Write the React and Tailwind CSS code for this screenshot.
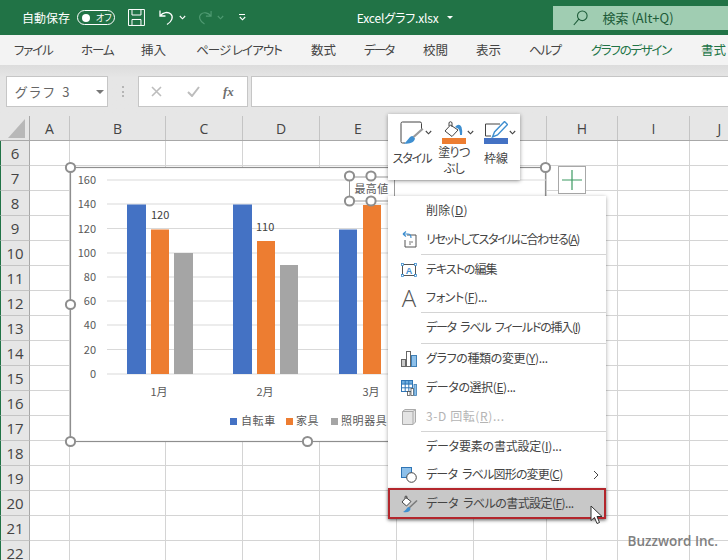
const cols = [
  { name: "A", w: "w-[40px]" },
  { name: "B", w: "w-[96px]" },
  { name: "C", w: "w-[77px]" },
  { name: "D", w: "w-[77px]" },
  { name: "E", w: "w-[77px]" },
  { name: "F", w: "w-[77px]" },
  { name: "G", w: "w-[73px]" },
  { name: "H", w: "w-[71px]" },
  { name: "I", w: "w-[72px]" },
  { name: "J", w: "w-[60px]" },
];
const rows = [6, 7, 8, 9, 10, 11, 12, 13, 14, 15, 16, 17, 18, 19, 20, 21, 22];
const tabs = [
  { label: "ファイル", w: "w-[39px]", t: "tracking-[-1.2px]" },
  { label: "ホーム", w: "w-[32px]", t: "tracking-[-1.1px]" },
  { label: "挿入", w: "w-[27px]", t: "" },
  { label: "ページ レイアウト", w: "w-[87px]", t: "tracking-[-0.95px]" },
  { label: "数式", w: "w-[25px]", t: "" },
  { label: "データ", w: "w-[31px]", t: "tracking-[-1.8px]" },
  { label: "校閲", w: "w-[25px]", t: "" },
  { label: "表示", w: "w-[25px]", t: "" },
  { label: "ヘルプ", w: "w-[34px]", t: "tracking-[-1.4px]" },
  { label: "グラフのデザイン", w: "w-[82px]", t: "tracking-[-1.3px]", green: true },
  { label: "書式", w: "w-[26px]", t: "", green: true },
];

const jp = "font-['Noto_Sans_CJK_JP','Noto_Sans',sans-serif] [font-feature-settings:'palt']";

function Caret({ className }) {
  return (
    <svg className={className} width="7" height="5" viewBox="0 0 7 5">
      <path d="M0.8 1 L3.5 3.8 L6.2 1" fill="none" stroke="currentColor" strokeWidth="1.1" />
    </svg>
  );
}

function TitleBar() {
  return (
    <div className="h-[35px] bg-[#217346] flex items-center text-white text-[12px] relative">
      <span className="ml-[22px] w-[48px] whitespace-nowrap">自動保存</span>
      <div className="ml-[7px] w-[38px] h-[15px] rounded-full border border-white flex items-center pl-[4px]">
        <span className="w-[8px] h-[8px] rounded-full bg-white"></span>
        <span className="ml-[6px] text-[9px] leading-none">オフ</span>
      </div>
      <svg className="ml-[13px]" width="17" height="17" viewBox="0 0 17 17" fill="none" stroke="#fff" strokeWidth="1">
        <path d="M0.5 0.5 H16.5 V16.5 H0.5 Z M4 0.5 V6 H13 V0.5 M4 16.5 V10.5 H13 V16.5" />
      </svg>
      <svg className="ml-[13px]" width="17" height="17" viewBox="0 0 17 17" fill="none" stroke="#fff" strokeWidth="1.3">
        <path d="M2 1.5 V7 H7.5 M2.3 6.7 C5 3.2 10 2.5 12.8 5 C15.6 7.6 14.2 12.5 9 15.5" />
      </svg>
      <Caret className="ml-[4px] text-white" />
      <svg className="ml-[11px]" width="16" height="17" viewBox="0 0 17 17" fill="none" stroke="#4f9a72" strokeWidth="1.2">
        <path d="M15 1.5 V7 H9.5 M14.7 6.7 C12 3.2 7 2.5 4.2 5 C1.4 7.6 2.8 12.5 8 15.5" />
      </svg>
      <Caret className="ml-[4px] text-[#4f9a72]" />
      <div className="ml-[15px] flex flex-col items-center gap-[1px]">
        <span className="w-[6px] h-[1px] bg-white"></span>
        <Caret className="text-white" />
      </div>
      <span className="ml-[111px] w-[84px] whitespace-nowrap tracking-[-0.15px]">Excelグラフ.xlsx</span>
      <span className="ml-[6px] w-0 h-0 border-x-[3px] border-x-transparent border-t-[3px] border-t-white"></span>
      <div className="ml-[100px] w-[176px] h-[24px] mt-[1px] bg-[#a0cdb2] flex items-center text-[#1d5c39]">
        <svg className="ml-[20px]" width="15" height="16" viewBox="0 0 15 16" fill="none" stroke="#1d5c39" strokeWidth="1.1">
          <circle cx="9.3" cy="5.8" r="4.8" />
          <path d="M5.8 9.2 L0.8 15" />
        </svg>
        <span className="ml-[15px] text-[13px] whitespace-nowrap">検索 (Alt+Q)</span>
      </div>
    </div>
  );
}

function Ribbon() {
  return (
    <div className="h-[30px] bg-[#f3f3f3] flex items-center pl-[14px] gap-[28px] text-[12.5px] text-[#444444] overflow-hidden">
      {tabs.map((t) => (
        <span key={t.label} className={`${t.w} ${t.t} shrink-0 whitespace-nowrap ${t.green ? "text-[#217346]" : ""}`}>
          {t.label}
        </span>
      ))}
    </div>
  );
}

function FormulaBar() {
  return (
    <div className="h-[51px] bg-gradient-to-b from-[#dcdcdc] to-[#e6e6e6] to-[25%] flex pt-[11px] pl-[6px]">
      <div className="w-[102px] h-[31px] bg-white border border-[#c6c6c6] flex items-center pl-[8px] text-[13px] text-[#666666] tracking-[2.6px]">
        グラフ 3
        <span className="ml-auto mr-[3px] w-0 h-0 border-x-[4px] border-x-transparent border-t-[4px] border-t-[#777777]"></span>
      </div>
      <div className="ml-[14px] w-[2px] h-[11px] mt-[10px] border-l-2 border-dotted border-[#b5b5b5]"></div>
      <div className="ml-[14px] w-[110px] h-[31px] bg-white border border-[#c6c6c6] flex items-center text-[#bdbdbd]">
        <svg className="ml-[12px]" width="11" height="11" viewBox="0 0 11 11" fill="none" stroke="#bdbdbd" strokeWidth="1.6">
          <path d="M1 1 L10 10 M10 1 L1 10" />
        </svg>
        <svg className="ml-[25px]" width="13" height="11" viewBox="0 0 13 11" fill="none" stroke="#bdbdbd" strokeWidth="2">
          <path d="M1 6 L5 10 L12 1" />
        </svg>
        <span className="ml-[23px] font-['Liberation_Serif',serif] italic font-bold text-[13px] text-[#6e6e6e]">fx</span>
      </div>
      <div className="ml-[3px] flex-1 h-[31px] bg-white border border-r-0 border-[#c6c6c6]"></div>
    </div>
  );
}

function Sheet() {
  return (
    <div className="font-['Open_Sans',sans-serif]">
      <div className="flex h-[25px] bg-[#e6e6e6] border-b border-[#a8a8a8]">
        <div className="w-[30px] shrink-0 border-r border-[#a8a8a8] flex items-end justify-end pr-[4px] pb-[2px]">
          <svg width="17" height="19" viewBox="0 0 17 19">
            <path d="M17 0 V19 H0 Z" fill="#b8b8b8" />
          </svg>
        </div>
        {cols.map((c) => (
          <div key={c.name} className={`${c.w} shrink-0 border-r border-[#c4c4c4] flex items-center justify-center text-[14px] text-[#444444]`}>
            {c.name}
          </div>
        ))}
      </div>
      {rows.map((r) => (
        <div key={r} className="flex h-[25px]">
          <div className="w-[30px] shrink-0 bg-[#e6e6e6] border-l border-l-[#217346] border-r border-r-[#a8a8a8] border-b border-b-[#c4c4c4] flex items-center justify-center text-[15px] text-[#444444]">
            {r}
          </div>
          {cols.map((c) => (
            <div key={c.name} className={`${c.w} shrink-0 bg-white border-r border-b border-[#d4d4d4]`}></div>
          ))}
        </div>
      ))}
    </div>
  );
}

function Handle({ x, y }) {
  return <circle cx={x} cy={y} r="4.6" fill="#fff" stroke="#8e8e8e" strokeWidth="2" />;
}

const gridY = [180, 204, 228.5, 253, 277, 301, 325, 349.5, 374];
const yLabels = [160, 140, 120, 100, 80, 60, 40, 20, 0];
const bars = [
  { x: 127, w: 19, top: 204.5, fill: "#4472c4" },
  { x: 151, w: 18, top: 229.5, fill: "#ed7d31" },
  { x: 174, w: 19, top: 253, fill: "#a5a5a5" },
  { x: 233, w: 19, top: 204.5, fill: "#4472c4" },
  { x: 257, w: 18, top: 241, fill: "#ed7d31" },
  { x: 280, w: 18, top: 265, fill: "#a5a5a5" },
  { x: 339, w: 18, top: 229.5, fill: "#4472c4" },
  { x: 363, w: 18, top: 205, fill: "#ed7d31" },
];

function Chart() {
  const font = "'Noto Sans CJK JP','Noto Sans',sans-serif";
  return (
    <svg className="absolute left-[60px] top-[157px]" width="500" height="295" viewBox="60 157 500 295" fontFamily={font}>
      <rect x="70.5" y="167.5" width="475" height="274" fill="#fff" stroke="#8e8e8e" strokeWidth="1.2" />
      {gridY.map((y) => (
        <line key={y} x1="107" x2="546" y1={y} y2={y} stroke="#d9d9d9" strokeWidth="1" />
      ))}
      {yLabels.map((v, i) => (
        <text key={v} x="96" y={gridY[i] + 4} textAnchor="end" fontSize="11" fill="#595959">{v}</text>
      ))}
      {bars.map((b) => (
        <rect key={b.x} x={b.x} y={b.top} width={b.w} height={374 - b.top} fill={b.fill} />
      ))}
      <text x="151" y="219" fontSize="11" fill="#404040">120</text>
      <text x="256" y="231" fontSize="11" fill="#404040">110</text>
      <text x="159" y="396" textAnchor="middle" fontSize="11" fill="#595959">1月</text>
      <text x="265" y="396" textAnchor="middle" fontSize="11" fill="#595959">2月</text>
      <text x="371" y="396" textAnchor="middle" fontSize="11" fill="#595959">3月</text>
      <rect x="230" y="418" width="7" height="7" fill="#4472c4" />
      <text x="241" y="425" fontSize="11" letterSpacing="0.6" fill="#595959">自転車</text>
      <rect x="286" y="418" width="7" height="7" fill="#ed7d31" />
      <text x="296" y="425" fontSize="11" letterSpacing="0.6" fill="#595959">家具</text>
      <rect x="331" y="418" width="7" height="7" fill="#a5a5a5" />
      <text x="341" y="425" fontSize="11" letterSpacing="0.6" fill="#595959">照明器具</text>
      <rect x="349.5" y="177" width="45" height="24" fill="#fff" stroke="#9a9a9a" strokeWidth="1" />
      <text x="371.5" y="193" textAnchor="middle" fontSize="11" letterSpacing="0.4" fill="#595959">最高値</text>
      <Handle x={70.5} y={167.5} />
      <Handle x={70.5} y={304.5} />
      <Handle x={70.5} y={441.5} />
      <Handle x={307.5} y={441.5} />
      <Handle x={545.5} y={167.5} />
      <Handle x={349.5} y={176} />
      <Handle x={371} y={176} />
      <Handle x={349.5} y={201} />
      <Handle x={371} y={201} />
    </svg>
  );
}

function PlusButton() {
  return (
    <div className="absolute left-[558px] top-[166px] w-[28px] h-[28px] bg-white border border-[#a8a8a8] flex items-center justify-center">
      <svg width="20" height="20" viewBox="0 0 20 20" stroke="#3c9a63" strokeWidth="1.2">
        <path d="M10 0 V20 M0 10 H20" />
      </svg>
    </div>
  );
}

function MiniToolbar() {
  return (
    <div className="absolute left-[388px] top-[114px] w-[132px] h-[66px] bg-white shadow-[0_1px_4px_rgba(0,0,0,0.4)] flex text-[12px] text-[#444444] pt-[7px] pl-[5px] leading-[16px]">
      <div className="w-[38px] flex flex-col items-center shrink-0">
        <div className="relative h-[23px] w-[38px] flex justify-center">
          <svg width="24" height="23" viewBox="0 0 24 23" fill="none">
            <path d="M5 22 H2.5 Q1 22 1 20.5 V2.5 Q1 1 2.5 1 H20 Q21.5 1 21.5 2.5 V9" stroke="#444" strokeWidth="1" />
            <path d="M23.5 8.5 L14 17 L12.5 15.5 L22 7 Z" fill="#9a9a9a" />
            <path d="M12.5 15 C9 15 9 19 4 22.5 C10 23.5 14.5 21 15 17.5 Z" fill="#3f8fd0" />
          </svg>
          <Caret className="absolute left-[32px] top-[9px] text-[#444444]" />
        </div>
        <span className="mt-[6px] whitespace-nowrap tracking-[-1.1px]">スタイル</span>
      </div>
      <div className="ml-[6px] w-[34px] flex flex-col items-center shrink-0">
        <div className="relative h-[23px] w-[34px] flex justify-center">
          <svg width="24" height="23" viewBox="0 0 24 23" fill="none">
            <path d="M8.5 4 L3 10 L10 15.5 L16 9 Z" fill="#fff" stroke="#444" strokeWidth="1" />
            <path d="M7 5 V1.5 Q8.5 0 10 1.5 V6" stroke="#444" strokeWidth="1" />
            <path d="M13 6 Q17 1.5 19.5 6 Q20.5 9 20 14 L18 14 Q18 9 16 7.5 Z" fill="#3f8fd0" />
            <rect x="0" y="17" width="24" height="6" fill="#ed7d31" />
          </svg>
          <Caret className="absolute left-[30px] top-[9px] text-[#444444]" />
        </div>
        <span className="mt-[0px] w-[34px] text-center tracking-[-0.6px]">塗りつぶし</span>
      </div>
      <div className="ml-[10px] w-[30px] flex flex-col items-center shrink-0">
        <div className="relative h-[23px] w-[30px] flex justify-center">
          <svg width="24" height="23" viewBox="0 0 24 23" fill="none">
            <path d="M1.5 15 V3 H16 M1.5 15 H7" stroke="#444" strokeWidth="1" />
            <path d="M20.5 0.5 L23.5 3.5 L13.5 14 L8.5 16 L10.5 11 Z" fill="#fff" stroke="#3f8fd0" strokeWidth="1.4" />
            <rect x="0" y="17" width="24" height="6" fill="#4472c4" />
          </svg>
          <Caret className="absolute left-[28px] top-[9px] text-[#444444]" />
        </div>
        <span className="mt-[6px] whitespace-nowrap">枠線</span>
      </div>
    </div>
  );
}

function ResetIcon() {
  return (
    <svg width="15" height="17" viewBox="0 0 15 17" fill="none">
      <path d="M5 4 H14 V16 H3 V9" stroke="#555" strokeWidth="1" />
      <path d="M1 3 L4 0.5 M1 3 L4 5.5 M1 3 H6 Q9 3 9 7" stroke="#3f8fd0" strokeWidth="1.2" />
      <path d="M7 11 H11 M7 13 H9" stroke="#777" strokeWidth="1" />
    </svg>
  );
}

function TextBoxIcon() {
  return (
    <svg width="16" height="14" viewBox="0 0 16 14" fill="none">
      <rect x="1.5" y="1.5" width="13" height="11" stroke="#555" strokeWidth="1" />
      <text x="8" y="10.5" textAnchor="middle" fontSize="9" fontWeight="700" fontFamily="'Liberation Sans'" fill="#3f8fd0">A</text>
      <g fill="#fff" stroke="#3f8fd0" strokeWidth="0.8">
        <rect x="0.5" y="0.5" width="2" height="2" />
        <rect x="13.5" y="0.5" width="2" height="2" />
        <rect x="0.5" y="11.5" width="2" height="2" />
        <rect x="13.5" y="11.5" width="2" height="2" />
      </g>
    </svg>
  );
}

function ChartTypeIcon() {
  return (
    <svg width="16" height="16" viewBox="0 0 16 16">
      <rect x="0.5" y="8.5" width="4" height="7" fill="#c8c8c8" stroke="#666" />
      <rect x="5.5" y="0.5" width="4" height="15" fill="#fff" stroke="#666" />
      <rect x="10.5" y="4.5" width="5" height="11" fill="#8dc0ea" stroke="#3f7fb5" />
    </svg>
  );
}

function DataIcon() {
  return (
    <svg width="16" height="16" viewBox="0 0 16 16">
      <rect x="0.5" y="0.5" width="11" height="11" fill="#fff" stroke="#2f75b5" />
      <rect x="0.5" y="0.5" width="11" height="3.6" fill="#6faee0" stroke="#2f75b5" />
      <path d="M4.2 0.5 V11.5 M7.8 0.5 V11.5 M0.5 7.8 H11.5" stroke="#2f75b5" strokeWidth="1" />
      <rect x="6.5" y="11.5" width="2.5" height="4" fill="#fff" stroke="#555" strokeWidth="0.8" />
      <rect x="10" y="8.5" width="2.5" height="7" fill="#fff" stroke="#555" strokeWidth="0.8" />
      <rect x="13" y="4.5" width="2.5" height="11" fill="#8dc0ea" stroke="#3f7fb5" strokeWidth="0.8" />
    </svg>
  );
}

function CubeIcon() {
  return (
    <svg width="14" height="16" viewBox="0 0 14 16">
      <path d="M0.5 2.5 L3 0.5 H13.5 V13 L11 15.5 H0.5 Z" fill="#e4e4e4" stroke="#aaa" />
      <path d="M0.5 2.5 H11 V15.5 M11 2.5 L13.5 0.5" fill="none" stroke="#aaa" />
    </svg>
  );
}

function ShapeIcon() {
  return (
    <svg width="16" height="16" viewBox="0 0 16 16">
      <rect x="0.5" y="0.5" width="10" height="10" fill="#8dc0ea" stroke="#2f75b5" />
      <circle cx="10.5" cy="10.5" r="4.8" fill="#fff" stroke="#444" strokeWidth="1" />
    </svg>
  );
}

function FormatIcon() {
  return (
    <svg width="18" height="18" viewBox="0 0 18 18" fill="none">
      <path d="M6 2.5 L2 7 L6.5 11 L11 6.5 Z" fill="#fff" stroke="#444" strokeWidth="1" />
      <path d="M5 3.5 V1.5 Q6 0.5 7 1.5 V4" stroke="#444" strokeWidth="0.9" />
      <path d="M17 5.5 L9 13" stroke="#7a7a7a" strokeWidth="1.6" />
      <path d="M9 12 C6.5 12 6.5 15.5 3 17 C7.5 18 10.5 16.5 10.5 13.5 Z" fill="#3f8fd0" />
    </svg>
  );
}

function Sep() {
  return <div className="h-[1px] ml-[33px] bg-[#d4d4d4]"></div>;
}

function Item({ icon, h, t = "", disabled, arrow, children }) {
  return (
    <div className={`${h} flex items-center ${disabled ? "text-[#b4b4b4]" : "text-[#444444]"}`}>
      <span className="w-[38px] shrink-0 flex justify-center pl-[4px]">{icon}</span>
      <span className={`whitespace-nowrap pb-[2px] ${t}`}>{children}</span>
      {arrow && (
        <svg className="ml-auto mr-[7px]" width="6" height="10" viewBox="0 0 6 10" fill="none" stroke="#444" strokeWidth="1">
          <path d="M1 1 L5 5 L1 9" />
        </svg>
      )}
    </div>
  );
}

function ContextMenu() {
  return (
    <div className="absolute left-[388px] top-[196px] w-[218px] bg-white shadow-[0_1px_4px_rgba(0,0,0,0.35)] text-[12px]">
      <Item h="h-[29px]" t="tracking-[0.3px]">削除(<u>D</u>)</Item>
      <Item h="h-[29px]" t="tracking-[-1.35px]" icon={<ResetIcon />}>リセットしてスタイルに合わせる(<u>A</u>)</Item>
      <Sep />
      <Item h="h-[29px]" t="tracking-[-1px]" icon={<TextBoxIcon />}>テキストの編集</Item>
      <Item
        h="h-[28px]"
        t="tracking-[-0.3px]"
        icon={<span className="font-['Open_Sans',sans-serif] font-light text-[24px] leading-none text-[#555555]">A</span>}
      >
        フォント(<u>F</u>)...
      </Item>
      <Sep />
      <Item h="h-[30px]" t="tracking-[-1.25px] [word-spacing:3px]">データ ラベル フィールドの挿入(<u>I</u>)</Item>
      <Sep />
      <Item h="h-[29px]" t="tracking-[-0.35px]" icon={<ChartTypeIcon />}>グラフの種類の変更(<u>Y</u>)...</Item>
      <Item h="h-[29px]" t="tracking-[-0.4px]" icon={<DataIcon />}>データの選択(<u>E</u>)...</Item>
      <Item h="h-[29px]" t="tracking-[0.6px]" disabled icon={<CubeIcon />}>3-D 回転(<u>R</u>)...</Item>
      <Sep />
      <Item h="h-[29px]" t="tracking-[-0.2px]">データ要素の書式設定(<u>I</u>)...</Item>
      <Item h="h-[27px]" t="tracking-[-0.8px] [word-spacing:3px]" arrow icon={<ShapeIcon />}>データ ラベル図形の変更(<u>C</u>)</Item>
      <div className="h-[31px] bg-[#c8c8c8] outline-2 outline-[#b3262c] -outline-offset-2 shadow-[0_1px_3px_rgba(0,0,0,0.4)] flex items-center">
        <span className="w-[38px] shrink-0 flex justify-center pl-[4px]"><FormatIcon /></span>
        <span className="whitespace-nowrap pb-[2px] text-[#444444] tracking-[-0.55px] [word-spacing:3px]">データ ラベルの書式設定(<u>F</u>)...</span>
      </div>
    </div>
  );
}

function Cursor() {
  return (
    <svg className="absolute left-[590px] top-[505px]" width="14" height="21" viewBox="0 0 14 21">
      <path d="M1 1 V15.5 L4.5 12.5 L7 18.5 L9.5 17.5 L7 11.5 H12 Z" fill="#fff" stroke="#333" strokeWidth="1" />
    </svg>
  );
}

export default function App() {
  return (
    <div className={`relative w-[728px] h-[560px] overflow-hidden bg-white ${jp}`}>
      <TitleBar />
      <Ribbon />
      <FormulaBar />
      <Sheet />
      <Chart />
      <PlusButton />
      <MiniToolbar />
      <ContextMenu />
      <Cursor />
      <span className="absolute right-[10px] bottom-[9px] font-['Open_Sans',sans-serif] font-semibold text-[13.5px] text-[#7f7f7f]">
        Buzzword Inc.
      </span>
    </div>
  );
}
